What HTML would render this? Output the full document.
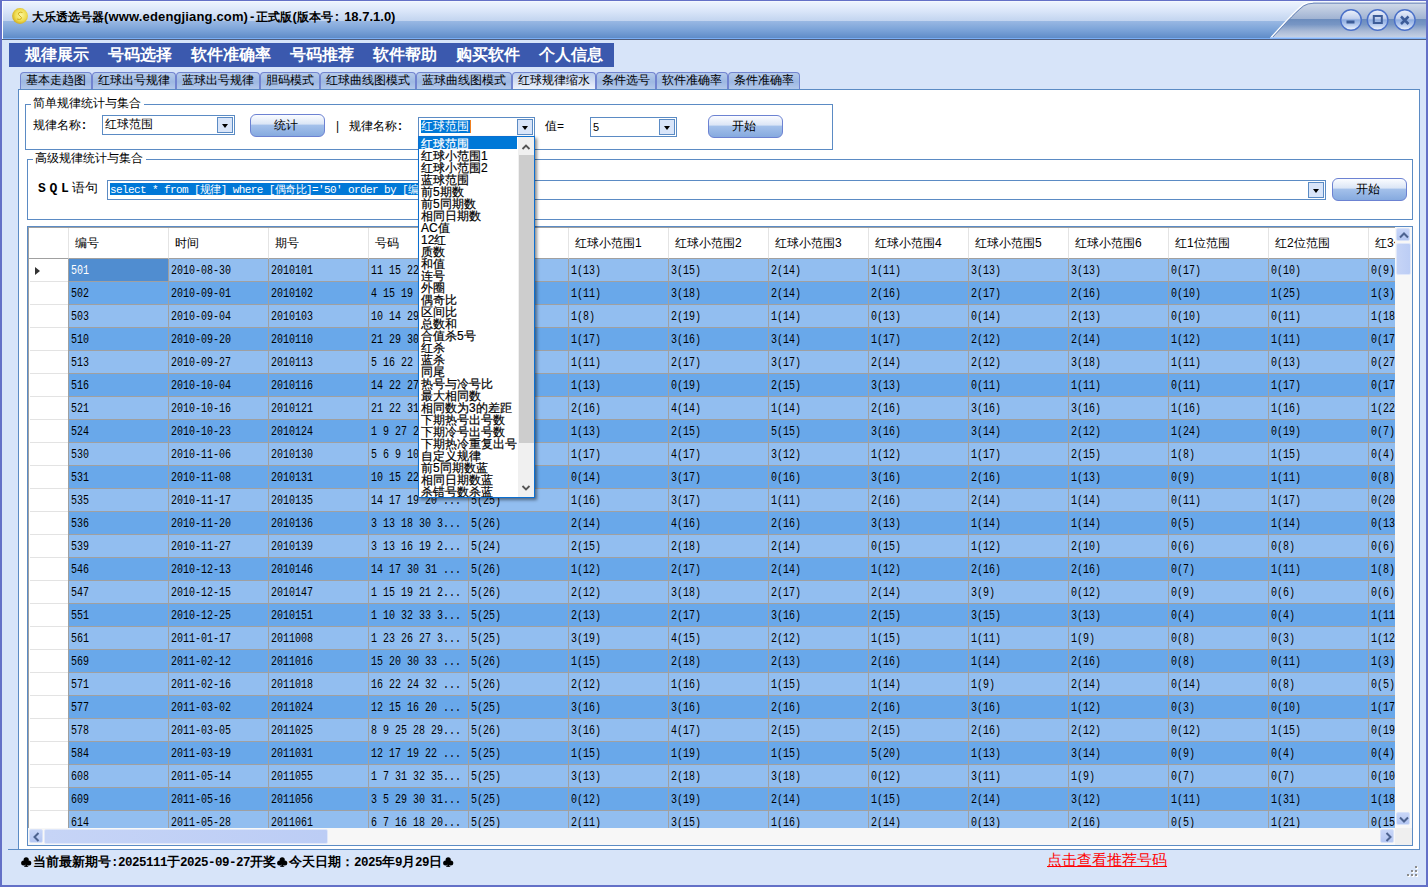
<!DOCTYPE html>
<html><head><meta charset="utf-8"><style>
*{margin:0;padding:0;box-sizing:border-box}
html,body{width:1428px;height:887px;overflow:hidden}
body{position:relative;background:#d7e4f9;font-family:"Liberation Sans",sans-serif;font-size:12px;color:#000}
.a{position:absolute}
/* window border */
#bl{left:0;top:0;width:2px;height:887px;background:#6370c7}
#br{left:1426px;top:0;width:2px;height:887px;background:#6370c7}
#bb{left:0;top:885px;width:1428px;height:2px;background:#6370c7}
#bt{left:0;top:0;width:1428px;height:1px;background:#6370c7}
/* title bar */
#tb{left:2px;top:1px;width:1424px;height:38px;background:linear-gradient(to bottom,#fbfdff 0px,#ecf3fe 1px,#dae6f9 10px,#c2d4ef 20px,#99b8e3 20px,#7ba3d8 29px,#5f8cc8 37px,#79aef5 37px,#79aef5 38px);border-left:1px solid #fff}
#tbl{left:2px;top:39px;width:1424px;height:1px;background:#4f5d7c}
#coin{left:12px;top:8px;width:16px;height:16px;border-radius:50%;background:radial-gradient(circle at 45% 40%,#fff6a8 0,#f0d640 45%,#d2ad18 80%,#b89010 100%)}
#ttl{left:32px;top:9px;font-size:13px;font-weight:bold;line-height:16px;white-space:nowrap;color:#000;letter-spacing:0px}
/* menu */
#menu{left:9px;top:43px;width:605px;height:24px;background:#3b59ae}
.mi{position:absolute;top:46px;font-size:15.6px;font-weight:bold;color:#fff;line-height:17px;white-space:nowrap}
/* tabs */
.tab{position:absolute;top:72px;height:17px;border:1px solid #7284d0;border-bottom:none;border-radius:4px 4px 0 0;background:linear-gradient(to bottom,#b6cbea 0,#9db8e2 55%,#b3c8ea 100%);font-size:12px;line-height:15px;padding-left:5px;white-space:nowrap}
.tab.on{background:linear-gradient(to bottom,#bccfee 0,#d2def3 50%,#eef3fc 100%)}
/* panel */
#panel{left:18px;top:89px;width:1402px;height:761px;background:#fff;border:1px solid #5b8bc4}
.gb{position:absolute;border:1px solid #5b8bc4}
.gbt{position:absolute;background:#fff;padding:0 3px 0 2px;font-size:12px;line-height:13px;white-space:nowrap}
.lbl{position:absolute;font-size:12px;line-height:13px;white-space:nowrap}
.cb{position:absolute;height:20px;border:1px solid #5b8bc4;background:#fff}
.cbb{position:absolute;top:1px;width:16px;height:16px;border:1px solid #5b8bc4;background:#d9e5f9}
.cbb:after{content:"";position:absolute;left:4px;top:6px;border-left:3.5px solid transparent;border-right:3.5px solid transparent;border-top:4px solid #000}
.btn{position:absolute;border:1px solid #6c82d2;border-radius:6px;background:linear-gradient(to bottom,#fbfcff 0,#dce6f6 42%,#a3c0ea 50%,#86aadf 100%);text-align:center;font-size:12px;line-height:21px;padding-right:4px}
/* grid */
#grid{left:27px;top:226px;width:1386px;height:620px;border:1px solid #5b8bc4;background:#fff;overflow:hidden}
#gin{position:absolute;left:0;top:0;width:1384px;height:618px;border-top:1px solid #a0a0a0;border-left:1px solid #a0a0a0;overflow:hidden}
#clip{position:absolute;left:0;top:0;width:1367px;height:601px;overflow:hidden}
.hc{position:absolute;top:0;height:31px;width:100px;border-left:1px solid #e4e4e4;border-bottom:1px solid #a0a0a0;padding-left:6px;line-height:30px;font-size:12px;white-space:nowrap;background:#fff}
.row{position:absolute;left:39px;width:1400px;height:23px}
.rl{background:#92bef0}
.rd{background:#69a8ea}
.row .c{position:absolute;top:0;width:100px;height:23px;border-left:1px solid #a0a0a0;border-bottom:1px solid #a0a0a0;padding-left:2px;font-family:"Liberation Mono",monospace;font-size:12px;line-height:24px;white-space:nowrap;overflow:hidden}
.row .c span{display:inline-block;transform:scaleX(0.8333);transform-origin:0 0}
.row .c.sel{background:#508dd0;color:#fff}
.rh{position:absolute;left:1px;width:38px;height:23px;border-bottom:1px solid #e3e3e3}
/* scrollbars */
#vs{left:1395px;top:227px;width:17px;height:601px;background:#f7f7f7}
#hs{left:28px;top:828px;width:1367px;height:17px;background:#f7f7f7}
#corner{left:1395px;top:828px;width:17px;height:17px;background:#efefef}
.sbtn{position:absolute;width:14px;height:13px;border-radius:2px;background:linear-gradient(to bottom,#c8d6f8,#b4c6f2);border:1px solid #d8e2f8}
.thumbv{position:absolute;background:linear-gradient(to right,#c6d4f6,#bccdf5);border-radius:2px;border:1px solid #dfe7fa}
/* dropdown */
#dd{left:418px;top:136px;width:117px;height:362px;border:1px solid #0b6fd1;background:#fff;box-shadow:2px 2px 3px rgba(0,0,0,.45);overflow:hidden}
.it{position:absolute;left:0px;width:99px;height:12px;font-size:12px;line-height:14px;white-space:nowrap;padding-left:2px;-webkit-text-stroke:0.2px #000}
.it.sel{-webkit-text-stroke:0.2px #fff}
.it.sel{background:#0078d7;color:#fff}
#ddsb{position:absolute;left:98px;top:0;width:17px;height:360px;background:#f0f0f0;border-left:1px solid #fff}
/* status */
#st{left:20px;top:854px;font-size:13px;font-weight:bold;line-height:15px;white-space:nowrap}
#lnk{left:1047px;top:852px;font-size:15px;line-height:16px;color:#f00;text-decoration:underline;white-space:nowrap}

.tc{font-size:12.25px}
#st .m{font-family:"Liberation Mono",monospace;font-size:12.5px;letter-spacing:-0.5px}
#st .cl{display:inline-block;width:13px;height:13px;position:relative;vertical-align:top}
.rhh{position:absolute;left:0;top:0;width:40px;height:31px;border-bottom:1px solid #a0a0a0;border-right:1px solid #a0a0a0;background:#fff}


</style></head><body>
<div class="a" id="tb"></div>
<div class="a" id="tbl"></div>
<svg class="a" style="left:12px;top:8px" width="16" height="16"><defs><radialGradient id="coing" cx="0.55" cy="0.45" r="0.6"><stop offset="0" stop-color="#fbf7a0"/><stop offset="0.6" stop-color="#efdc50"/><stop offset="1" stop-color="#caa418"/></radialGradient></defs><circle cx="8" cy="8" r="7.9" fill="url(#coing)"/><path d="M10.5,4.5 Q8,3.5 6.5,5 Q5.5,6.5 8,8 Q10.5,9.5 9,11 Q7.5,12 5,11" fill="none" stroke="#d4b020" stroke-width="1"/></svg>
<div class="a" id="ttl"><span class="tc">大乐透选号器</span><span style="letter-spacing:0.15px">(www.edengjiang.com)</span><span style="margin:0 2px">-</span><span class="tc">正式版</span>(<span class="tc">版本号</span><span style="margin:0 5px 0 2px">:</span>18.7.1.0)</div>
<svg class="a" style="left:1260px;top:0" width="168" height="40" viewBox="1260 0 168 40">
<defs>
<linearGradient id="cg" x1="0" y1="0" x2="0" y2="1">
<stop offset="0" stop-color="#d3dcea"/><stop offset="0.46" stop-color="#a0b3d2"/><stop offset="0.47" stop-color="#6b8cbd"/><stop offset="0.62" stop-color="#7896c4"/><stop offset="0.8" stop-color="#a9bad6"/><stop offset="1" stop-color="#c9d4e6"/>
</linearGradient>
<radialGradient id="bg" cx="0.5" cy="0.75" r="0.6">
<stop offset="0" stop-color="#ffffff"/><stop offset="0.5" stop-color="#a9c3ea"/><stop offset="1" stop-color="#7a9fd8"/>
</radialGradient>
<linearGradient id="bgt" x1="0" y1="0" x2="0" y2="1">
<stop offset="0" stop-color="#eef2fb"/><stop offset="0.42" stop-color="#c3d1ee"/><stop offset="0.5" stop-color="#8dace0"/><stop offset="0.72" stop-color="#b4c9ee"/><stop offset="1" stop-color="#f8fbff"/>
</linearGradient>
</defs>
<path d="M1270.5,38 C1280,28 1292,14 1302,5.5 Q1306,2.5 1313,2.5 L1426,2.5 L1426,38 Z" fill="url(#cg)"/>
<path d="M1270.5,38 C1280,28 1292,14 1302,5.5 Q1306,2.5 1313,2.5" fill="none" stroke="#ffffff" stroke-width="1.3"/>
<path d="M1272,38 C1281.5,28 1293.5,14 1303.5,6 Q1307.5,3.2 1314,3.2 L1426,3.2" fill="none" stroke="#6a86b8" stroke-width="1"/>
<rect x="1270" y="37" width="156" height="1.2" fill="#a9c9f9"/>
<g stroke="#4a70c8" stroke-width="1.4" fill="url(#bgt)">
<circle cx="1351" cy="20" r="10.3"/><circle cx="1377.6" cy="20" r="10.3"/><circle cx="1404.8" cy="20" r="10.3"/>
</g>
<rect x="1346.5" y="20.5" width="8" height="3" fill="#3d5c98"/>
<rect x="1373.8" y="16" width="8" height="7" fill="none" stroke="#3d5c98" stroke-width="2"/>
<path d="M1401,16.5 L1408.5,24 M1408.5,16.5 L1401,24" stroke="#3d5c98" stroke-width="2.5"/>
</svg>
<div class="a" id="bl"></div><div class="a" id="br"></div><div class="a" id="bb"></div><div class="a" id="bt"></div>

<div class="a" id="menu"></div>
<div class="mi" style="left:25px">规律展示</div>
<div class="mi" style="left:108px">号码选择</div>
<div class="mi" style="left:191px">软件准确率</div>
<div class="mi" style="left:290px">号码推荐</div>
<div class="mi" style="left:373px">软件帮助</div>
<div class="mi" style="left:456px">购买软件</div>
<div class="mi" style="left:539px">个人信息</div>

<div class="a" id="panel"></div>
<div class="tab" style="left:20px;width:72px">基本走趋图</div>
<div class="tab" style="left:92px;width:84px">红球出号规律</div>
<div class="tab" style="left:176px;width:84px">蓝球出号规律</div>
<div class="tab" style="left:260px;width:60px">胆码模式</div>
<div class="tab" style="left:320px;width:96px">红球曲线图模式</div>
<div class="tab" style="left:416px;width:96px">蓝球曲线图模式</div>
<div class="tab on" style="left:512px;width:84px">红球规律缩水</div>
<div class="tab" style="left:596px;width:60px">条件选号</div>
<div class="tab" style="left:656px;width:72px">软件准确率</div>
<div class="tab" style="left:728px;width:72px">条件准确率</div>

<div class="gb" style="left:25px;top:104px;width:808px;height:46px"></div>
<div class="gbt" style="left:31px;top:97px">简单规律统计与集合</div>
<div class="lbl" style="left:33px;top:119px">规律名称<span style="display:inline-block;width:12px;padding-left:1px;font-weight:bold">:</span></div>
<div class="cb" style="left:102px;top:115px;width:133px"><div class="lbl" style="left:2px;top:2px">红球范围</div><div class="cbb" style="left:114px"></div></div>
<div class="btn" style="left:250px;top:114px;width:75px;height:23px">统计</div>
<div class="lbl" style="left:336px;top:120px">|</div>
<div class="lbl" style="left:349px;top:120px">规律名称<span style="display:inline-block;width:12px;padding-left:1px;font-weight:bold">:</span></div>
<div class="cb" style="left:418px;top:117px;width:117px"><div class="lbl" style="left:2px;top:2px;background:#0078d7;color:#fff;padding:0 1px 0 0">红球范围</div><div style="position:absolute;left:51px;top:2px;width:1px;height:13px;background:#f08020"></div><div class="cbb" style="left:98px"></div></div>
<div class="lbl" style="left:545px;top:120px">值=</div>
<div class="cb" style="left:590px;top:117px;width:87px"><div class="lbl" style="left:2px;top:3px;font-size:11px">5</div><div class="cbb" style="left:68px"></div></div>
<div class="btn" style="left:708px;top:115px;width:75px;height:23px">开始</div>

<div class="gb" style="left:27px;top:159px;width:1386px;height:61px"></div>
<div class="gbt" style="left:33px;top:152px">高级规律统计与集合</div>
<div class="lbl" style="left:38px;top:181px"><b style="font-family:'Liberation Mono',monospace;letter-spacing:3.7px;font-size:13px">SQL</b><span style="font-size:13px;margin-left:-0.5px">语句</span></div>
<div class="cb" style="left:107px;top:180px;width:1219px"><div class="lbl" style="left:2px;top:2px;height:12px;background:#0078d7;color:#fff;font-family:'Liberation Mono',monospace;font-size:11px;letter-spacing:-0.6px;line-height:14px;overflow:hidden">select * from [规律] where [偶奇比]='50' order by [编号]</div><div class="cbb" style="left:1200px"></div></div>
<div class="btn" style="left:1332px;top:178px;width:75px;height:23px">开始</div>

<div class="a" id="grid"><div id="gin"><div id="clip">
<div class="rhh"></div>
<div class="hc" style="left:39px">编号</div>
<div class="hc" style="left:139px">时间</div>
<div class="hc" style="left:239px">期号</div>
<div class="hc" style="left:339px">号码</div>
<div class="hc" style="left:439px">红球范围</div>
<div class="hc" style="left:539px">红球小范围1</div>
<div class="hc" style="left:639px">红球小范围2</div>
<div class="hc" style="left:739px">红球小范围3</div>
<div class="hc" style="left:839px">红球小范围4</div>
<div class="hc" style="left:939px">红球小范围5</div>
<div class="hc" style="left:1039px">红球小范围6</div>
<div class="hc" style="left:1139px">红1位范围</div>
<div class="hc" style="left:1239px">红2位范围</div>
<div class="hc" style="left:1339px">红3位范围</div>
<div class="row rl" style="top:31px">
<div class="c sel" style="left:0px"><span>501</span></div>
<div class="c" style="left:100px"><span>2010-08-30</span></div>
<div class="c" style="left:200px"><span>2010101</span></div>
<div class="c" style="left:300px"><span>11 15 22 ...</span></div>
<div class="c" style="left:400px"><span>5(25)</span></div>
<div class="c" style="left:500px"><span>1(13)</span></div>
<div class="c" style="left:600px"><span>3(15)</span></div>
<div class="c" style="left:700px"><span>2(14)</span></div>
<div class="c" style="left:800px"><span>1(11)</span></div>
<div class="c" style="left:900px"><span>3(13)</span></div>
<div class="c" style="left:1000px"><span>3(13)</span></div>
<div class="c" style="left:1100px"><span>0(17)</span></div>
<div class="c" style="left:1200px"><span>0(10)</span></div>
<div class="c" style="left:1300px"><span>0(9)</span></div>
</div>
<div class="rh" style="top:31px"></div>
<div class="row rd" style="top:54px">
<div class="c" style="left:0px"><span>502</span></div>
<div class="c" style="left:100px"><span>2010-09-01</span></div>
<div class="c" style="left:200px"><span>2010102</span></div>
<div class="c" style="left:300px"><span>4 15 19 2...</span></div>
<div class="c" style="left:400px"><span>5(25)</span></div>
<div class="c" style="left:500px"><span>1(11)</span></div>
<div class="c" style="left:600px"><span>3(18)</span></div>
<div class="c" style="left:700px"><span>2(14)</span></div>
<div class="c" style="left:800px"><span>2(16)</span></div>
<div class="c" style="left:900px"><span>2(17)</span></div>
<div class="c" style="left:1000px"><span>2(16)</span></div>
<div class="c" style="left:1100px"><span>0(10)</span></div>
<div class="c" style="left:1200px"><span>1(25)</span></div>
<div class="c" style="left:1300px"><span>1(3)</span></div>
</div>
<div class="rh" style="top:54px"></div>
<div class="row rl" style="top:77px">
<div class="c" style="left:0px"><span>503</span></div>
<div class="c" style="left:100px"><span>2010-09-04</span></div>
<div class="c" style="left:200px"><span>2010103</span></div>
<div class="c" style="left:300px"><span>10 14 29 ...</span></div>
<div class="c" style="left:400px"><span>5(25)</span></div>
<div class="c" style="left:500px"><span>1(8)</span></div>
<div class="c" style="left:600px"><span>2(19)</span></div>
<div class="c" style="left:700px"><span>1(14)</span></div>
<div class="c" style="left:800px"><span>0(13)</span></div>
<div class="c" style="left:900px"><span>0(14)</span></div>
<div class="c" style="left:1000px"><span>2(13)</span></div>
<div class="c" style="left:1100px"><span>0(10)</span></div>
<div class="c" style="left:1200px"><span>0(11)</span></div>
<div class="c" style="left:1300px"><span>1(18)</span></div>
</div>
<div class="rh" style="top:77px"></div>
<div class="row rd" style="top:100px">
<div class="c" style="left:0px"><span>510</span></div>
<div class="c" style="left:100px"><span>2010-09-20</span></div>
<div class="c" style="left:200px"><span>2010110</span></div>
<div class="c" style="left:300px"><span>21 29 30 ...</span></div>
<div class="c" style="left:400px"><span>5(25)</span></div>
<div class="c" style="left:500px"><span>1(17)</span></div>
<div class="c" style="left:600px"><span>3(16)</span></div>
<div class="c" style="left:700px"><span>3(14)</span></div>
<div class="c" style="left:800px"><span>1(17)</span></div>
<div class="c" style="left:900px"><span>2(12)</span></div>
<div class="c" style="left:1000px"><span>2(14)</span></div>
<div class="c" style="left:1100px"><span>1(12)</span></div>
<div class="c" style="left:1200px"><span>1(11)</span></div>
<div class="c" style="left:1300px"><span>0(17)</span></div>
</div>
<div class="rh" style="top:100px"></div>
<div class="row rl" style="top:123px">
<div class="c" style="left:0px"><span>513</span></div>
<div class="c" style="left:100px"><span>2010-09-27</span></div>
<div class="c" style="left:200px"><span>2010113</span></div>
<div class="c" style="left:300px"><span>5 16 22 2...</span></div>
<div class="c" style="left:400px"><span>5(25)</span></div>
<div class="c" style="left:500px"><span>1(11)</span></div>
<div class="c" style="left:600px"><span>2(17)</span></div>
<div class="c" style="left:700px"><span>3(17)</span></div>
<div class="c" style="left:800px"><span>2(14)</span></div>
<div class="c" style="left:900px"><span>2(12)</span></div>
<div class="c" style="left:1000px"><span>3(18)</span></div>
<div class="c" style="left:1100px"><span>1(11)</span></div>
<div class="c" style="left:1200px"><span>0(13)</span></div>
<div class="c" style="left:1300px"><span>0(27)</span></div>
</div>
<div class="rh" style="top:123px"></div>
<div class="row rd" style="top:146px">
<div class="c" style="left:0px"><span>516</span></div>
<div class="c" style="left:100px"><span>2010-10-04</span></div>
<div class="c" style="left:200px"><span>2010116</span></div>
<div class="c" style="left:300px"><span>14 22 27 ...</span></div>
<div class="c" style="left:400px"><span>5(25)</span></div>
<div class="c" style="left:500px"><span>1(13)</span></div>
<div class="c" style="left:600px"><span>0(19)</span></div>
<div class="c" style="left:700px"><span>2(15)</span></div>
<div class="c" style="left:800px"><span>3(13)</span></div>
<div class="c" style="left:900px"><span>0(11)</span></div>
<div class="c" style="left:1000px"><span>1(11)</span></div>
<div class="c" style="left:1100px"><span>0(11)</span></div>
<div class="c" style="left:1200px"><span>1(17)</span></div>
<div class="c" style="left:1300px"><span>0(17)</span></div>
</div>
<div class="rh" style="top:146px"></div>
<div class="row rl" style="top:169px">
<div class="c" style="left:0px"><span>521</span></div>
<div class="c" style="left:100px"><span>2010-10-16</span></div>
<div class="c" style="left:200px"><span>2010121</span></div>
<div class="c" style="left:300px"><span>21 22 31 ...</span></div>
<div class="c" style="left:400px"><span>5(25)</span></div>
<div class="c" style="left:500px"><span>2(16)</span></div>
<div class="c" style="left:600px"><span>4(14)</span></div>
<div class="c" style="left:700px"><span>1(14)</span></div>
<div class="c" style="left:800px"><span>2(16)</span></div>
<div class="c" style="left:900px"><span>3(16)</span></div>
<div class="c" style="left:1000px"><span>3(16)</span></div>
<div class="c" style="left:1100px"><span>1(16)</span></div>
<div class="c" style="left:1200px"><span>1(16)</span></div>
<div class="c" style="left:1300px"><span>1(22)</span></div>
</div>
<div class="rh" style="top:169px"></div>
<div class="row rd" style="top:192px">
<div class="c" style="left:0px"><span>524</span></div>
<div class="c" style="left:100px"><span>2010-10-23</span></div>
<div class="c" style="left:200px"><span>2010124</span></div>
<div class="c" style="left:300px"><span>1 9 27 28...</span></div>
<div class="c" style="left:400px"><span>5(25)</span></div>
<div class="c" style="left:500px"><span>1(13)</span></div>
<div class="c" style="left:600px"><span>2(15)</span></div>
<div class="c" style="left:700px"><span>5(15)</span></div>
<div class="c" style="left:800px"><span>3(16)</span></div>
<div class="c" style="left:900px"><span>3(14)</span></div>
<div class="c" style="left:1000px"><span>2(12)</span></div>
<div class="c" style="left:1100px"><span>1(24)</span></div>
<div class="c" style="left:1200px"><span>0(19)</span></div>
<div class="c" style="left:1300px"><span>0(7)</span></div>
</div>
<div class="rh" style="top:192px"></div>
<div class="row rl" style="top:215px">
<div class="c" style="left:0px"><span>530</span></div>
<div class="c" style="left:100px"><span>2010-11-06</span></div>
<div class="c" style="left:200px"><span>2010130</span></div>
<div class="c" style="left:300px"><span>5 6 9 10 ...</span></div>
<div class="c" style="left:400px"><span>5(25)</span></div>
<div class="c" style="left:500px"><span>1(17)</span></div>
<div class="c" style="left:600px"><span>4(17)</span></div>
<div class="c" style="left:700px"><span>3(12)</span></div>
<div class="c" style="left:800px"><span>1(12)</span></div>
<div class="c" style="left:900px"><span>1(17)</span></div>
<div class="c" style="left:1000px"><span>2(15)</span></div>
<div class="c" style="left:1100px"><span>1(8)</span></div>
<div class="c" style="left:1200px"><span>1(15)</span></div>
<div class="c" style="left:1300px"><span>0(4)</span></div>
</div>
<div class="rh" style="top:215px"></div>
<div class="row rd" style="top:238px">
<div class="c" style="left:0px"><span>531</span></div>
<div class="c" style="left:100px"><span>2010-11-08</span></div>
<div class="c" style="left:200px"><span>2010131</span></div>
<div class="c" style="left:300px"><span>10 15 22 ...</span></div>
<div class="c" style="left:400px"><span>5(25)</span></div>
<div class="c" style="left:500px"><span>0(14)</span></div>
<div class="c" style="left:600px"><span>3(17)</span></div>
<div class="c" style="left:700px"><span>0(16)</span></div>
<div class="c" style="left:800px"><span>3(16)</span></div>
<div class="c" style="left:900px"><span>2(16)</span></div>
<div class="c" style="left:1000px"><span>1(13)</span></div>
<div class="c" style="left:1100px"><span>0(9)</span></div>
<div class="c" style="left:1200px"><span>1(11)</span></div>
<div class="c" style="left:1300px"><span>0(8)</span></div>
</div>
<div class="rh" style="top:238px"></div>
<div class="row rl" style="top:261px">
<div class="c" style="left:0px"><span>535</span></div>
<div class="c" style="left:100px"><span>2010-11-17</span></div>
<div class="c" style="left:200px"><span>2010135</span></div>
<div class="c" style="left:300px"><span>14 17 19 20 ...</span></div>
<div class="c" style="left:400px"><span>5(25)</span></div>
<div class="c" style="left:500px"><span>1(16)</span></div>
<div class="c" style="left:600px"><span>3(17)</span></div>
<div class="c" style="left:700px"><span>1(11)</span></div>
<div class="c" style="left:800px"><span>2(16)</span></div>
<div class="c" style="left:900px"><span>2(14)</span></div>
<div class="c" style="left:1000px"><span>1(14)</span></div>
<div class="c" style="left:1100px"><span>0(11)</span></div>
<div class="c" style="left:1200px"><span>1(17)</span></div>
<div class="c" style="left:1300px"><span>0(20)</span></div>
</div>
<div class="rh" style="top:261px"></div>
<div class="row rd" style="top:284px">
<div class="c" style="left:0px"><span>536</span></div>
<div class="c" style="left:100px"><span>2010-11-20</span></div>
<div class="c" style="left:200px"><span>2010136</span></div>
<div class="c" style="left:300px"><span>3 13 18 30 3...</span></div>
<div class="c" style="left:400px"><span>5(26)</span></div>
<div class="c" style="left:500px"><span>2(14)</span></div>
<div class="c" style="left:600px"><span>4(16)</span></div>
<div class="c" style="left:700px"><span>2(16)</span></div>
<div class="c" style="left:800px"><span>3(13)</span></div>
<div class="c" style="left:900px"><span>1(14)</span></div>
<div class="c" style="left:1000px"><span>1(14)</span></div>
<div class="c" style="left:1100px"><span>0(5)</span></div>
<div class="c" style="left:1200px"><span>1(14)</span></div>
<div class="c" style="left:1300px"><span>0(13)</span></div>
</div>
<div class="rh" style="top:284px"></div>
<div class="row rl" style="top:307px">
<div class="c" style="left:0px"><span>539</span></div>
<div class="c" style="left:100px"><span>2010-11-27</span></div>
<div class="c" style="left:200px"><span>2010139</span></div>
<div class="c" style="left:300px"><span>3 13 16 19 2...</span></div>
<div class="c" style="left:400px"><span>5(24)</span></div>
<div class="c" style="left:500px"><span>2(15)</span></div>
<div class="c" style="left:600px"><span>2(18)</span></div>
<div class="c" style="left:700px"><span>2(14)</span></div>
<div class="c" style="left:800px"><span>0(15)</span></div>
<div class="c" style="left:900px"><span>1(12)</span></div>
<div class="c" style="left:1000px"><span>2(10)</span></div>
<div class="c" style="left:1100px"><span>0(6)</span></div>
<div class="c" style="left:1200px"><span>0(8)</span></div>
<div class="c" style="left:1300px"><span>0(6)</span></div>
</div>
<div class="rh" style="top:307px"></div>
<div class="row rd" style="top:330px">
<div class="c" style="left:0px"><span>546</span></div>
<div class="c" style="left:100px"><span>2010-12-13</span></div>
<div class="c" style="left:200px"><span>2010146</span></div>
<div class="c" style="left:300px"><span>14 17 30 31 ...</span></div>
<div class="c" style="left:400px"><span>5(26)</span></div>
<div class="c" style="left:500px"><span>1(12)</span></div>
<div class="c" style="left:600px"><span>2(17)</span></div>
<div class="c" style="left:700px"><span>2(14)</span></div>
<div class="c" style="left:800px"><span>1(12)</span></div>
<div class="c" style="left:900px"><span>2(16)</span></div>
<div class="c" style="left:1000px"><span>2(16)</span></div>
<div class="c" style="left:1100px"><span>0(7)</span></div>
<div class="c" style="left:1200px"><span>1(11)</span></div>
<div class="c" style="left:1300px"><span>1(8)</span></div>
</div>
<div class="rh" style="top:330px"></div>
<div class="row rl" style="top:353px">
<div class="c" style="left:0px"><span>547</span></div>
<div class="c" style="left:100px"><span>2010-12-15</span></div>
<div class="c" style="left:200px"><span>2010147</span></div>
<div class="c" style="left:300px"><span>1 15 19 21 2...</span></div>
<div class="c" style="left:400px"><span>5(26)</span></div>
<div class="c" style="left:500px"><span>2(12)</span></div>
<div class="c" style="left:600px"><span>3(18)</span></div>
<div class="c" style="left:700px"><span>2(17)</span></div>
<div class="c" style="left:800px"><span>2(14)</span></div>
<div class="c" style="left:900px"><span>3(9)</span></div>
<div class="c" style="left:1000px"><span>0(12)</span></div>
<div class="c" style="left:1100px"><span>0(9)</span></div>
<div class="c" style="left:1200px"><span>0(6)</span></div>
<div class="c" style="left:1300px"><span>0(6)</span></div>
</div>
<div class="rh" style="top:353px"></div>
<div class="row rd" style="top:376px">
<div class="c" style="left:0px"><span>551</span></div>
<div class="c" style="left:100px"><span>2010-12-25</span></div>
<div class="c" style="left:200px"><span>2010151</span></div>
<div class="c" style="left:300px"><span>1 10 32 33 3...</span></div>
<div class="c" style="left:400px"><span>5(25)</span></div>
<div class="c" style="left:500px"><span>2(13)</span></div>
<div class="c" style="left:600px"><span>2(17)</span></div>
<div class="c" style="left:700px"><span>3(16)</span></div>
<div class="c" style="left:800px"><span>2(15)</span></div>
<div class="c" style="left:900px"><span>3(15)</span></div>
<div class="c" style="left:1000px"><span>3(13)</span></div>
<div class="c" style="left:1100px"><span>0(4)</span></div>
<div class="c" style="left:1200px"><span>0(4)</span></div>
<div class="c" style="left:1300px"><span>1(11)</span></div>
</div>
<div class="rh" style="top:376px"></div>
<div class="row rl" style="top:399px">
<div class="c" style="left:0px"><span>561</span></div>
<div class="c" style="left:100px"><span>2011-01-17</span></div>
<div class="c" style="left:200px"><span>2011008</span></div>
<div class="c" style="left:300px"><span>1 23 26 27 3...</span></div>
<div class="c" style="left:400px"><span>5(25)</span></div>
<div class="c" style="left:500px"><span>3(19)</span></div>
<div class="c" style="left:600px"><span>4(15)</span></div>
<div class="c" style="left:700px"><span>2(12)</span></div>
<div class="c" style="left:800px"><span>1(15)</span></div>
<div class="c" style="left:900px"><span>1(11)</span></div>
<div class="c" style="left:1000px"><span>1(9)</span></div>
<div class="c" style="left:1100px"><span>0(8)</span></div>
<div class="c" style="left:1200px"><span>0(3)</span></div>
<div class="c" style="left:1300px"><span>1(12)</span></div>
</div>
<div class="rh" style="top:399px"></div>
<div class="row rd" style="top:422px">
<div class="c" style="left:0px"><span>569</span></div>
<div class="c" style="left:100px"><span>2011-02-12</span></div>
<div class="c" style="left:200px"><span>2011016</span></div>
<div class="c" style="left:300px"><span>15 20 30 33 ...</span></div>
<div class="c" style="left:400px"><span>5(26)</span></div>
<div class="c" style="left:500px"><span>1(15)</span></div>
<div class="c" style="left:600px"><span>2(18)</span></div>
<div class="c" style="left:700px"><span>2(13)</span></div>
<div class="c" style="left:800px"><span>2(16)</span></div>
<div class="c" style="left:900px"><span>1(14)</span></div>
<div class="c" style="left:1000px"><span>2(16)</span></div>
<div class="c" style="left:1100px"><span>0(8)</span></div>
<div class="c" style="left:1200px"><span>0(11)</span></div>
<div class="c" style="left:1300px"><span>1(3)</span></div>
</div>
<div class="rh" style="top:422px"></div>
<div class="row rl" style="top:445px">
<div class="c" style="left:0px"><span>571</span></div>
<div class="c" style="left:100px"><span>2011-02-16</span></div>
<div class="c" style="left:200px"><span>2011018</span></div>
<div class="c" style="left:300px"><span>16 22 24 32 ...</span></div>
<div class="c" style="left:400px"><span>5(26)</span></div>
<div class="c" style="left:500px"><span>2(12)</span></div>
<div class="c" style="left:600px"><span>1(16)</span></div>
<div class="c" style="left:700px"><span>1(15)</span></div>
<div class="c" style="left:800px"><span>1(14)</span></div>
<div class="c" style="left:900px"><span>1(9)</span></div>
<div class="c" style="left:1000px"><span>2(14)</span></div>
<div class="c" style="left:1100px"><span>0(14)</span></div>
<div class="c" style="left:1200px"><span>0(8)</span></div>
<div class="c" style="left:1300px"><span>0(5)</span></div>
</div>
<div class="rh" style="top:445px"></div>
<div class="row rd" style="top:468px">
<div class="c" style="left:0px"><span>577</span></div>
<div class="c" style="left:100px"><span>2011-03-02</span></div>
<div class="c" style="left:200px"><span>2011024</span></div>
<div class="c" style="left:300px"><span>12 15 16 20 ...</span></div>
<div class="c" style="left:400px"><span>5(25)</span></div>
<div class="c" style="left:500px"><span>3(16)</span></div>
<div class="c" style="left:600px"><span>3(16)</span></div>
<div class="c" style="left:700px"><span>2(16)</span></div>
<div class="c" style="left:800px"><span>2(16)</span></div>
<div class="c" style="left:900px"><span>3(16)</span></div>
<div class="c" style="left:1000px"><span>1(12)</span></div>
<div class="c" style="left:1100px"><span>0(3)</span></div>
<div class="c" style="left:1200px"><span>0(10)</span></div>
<div class="c" style="left:1300px"><span>1(17)</span></div>
</div>
<div class="rh" style="top:468px"></div>
<div class="row rl" style="top:491px">
<div class="c" style="left:0px"><span>578</span></div>
<div class="c" style="left:100px"><span>2011-03-05</span></div>
<div class="c" style="left:200px"><span>2011025</span></div>
<div class="c" style="left:300px"><span>8 9 25 28 29...</span></div>
<div class="c" style="left:400px"><span>5(26)</span></div>
<div class="c" style="left:500px"><span>3(16)</span></div>
<div class="c" style="left:600px"><span>4(17)</span></div>
<div class="c" style="left:700px"><span>2(15)</span></div>
<div class="c" style="left:800px"><span>2(15)</span></div>
<div class="c" style="left:900px"><span>2(16)</span></div>
<div class="c" style="left:1000px"><span>2(12)</span></div>
<div class="c" style="left:1100px"><span>0(12)</span></div>
<div class="c" style="left:1200px"><span>1(15)</span></div>
<div class="c" style="left:1300px"><span>0(19)</span></div>
</div>
<div class="rh" style="top:491px"></div>
<div class="row rd" style="top:514px">
<div class="c" style="left:0px"><span>584</span></div>
<div class="c" style="left:100px"><span>2011-03-19</span></div>
<div class="c" style="left:200px"><span>2011031</span></div>
<div class="c" style="left:300px"><span>12 17 19 22 ...</span></div>
<div class="c" style="left:400px"><span>5(25)</span></div>
<div class="c" style="left:500px"><span>1(15)</span></div>
<div class="c" style="left:600px"><span>1(19)</span></div>
<div class="c" style="left:700px"><span>1(15)</span></div>
<div class="c" style="left:800px"><span>5(20)</span></div>
<div class="c" style="left:900px"><span>1(13)</span></div>
<div class="c" style="left:1000px"><span>3(14)</span></div>
<div class="c" style="left:1100px"><span>0(9)</span></div>
<div class="c" style="left:1200px"><span>0(4)</span></div>
<div class="c" style="left:1300px"><span>0(4)</span></div>
</div>
<div class="rh" style="top:514px"></div>
<div class="row rl" style="top:537px">
<div class="c" style="left:0px"><span>608</span></div>
<div class="c" style="left:100px"><span>2011-05-14</span></div>
<div class="c" style="left:200px"><span>2011055</span></div>
<div class="c" style="left:300px"><span>1 7 31 32 35...</span></div>
<div class="c" style="left:400px"><span>5(25)</span></div>
<div class="c" style="left:500px"><span>3(13)</span></div>
<div class="c" style="left:600px"><span>2(18)</span></div>
<div class="c" style="left:700px"><span>3(18)</span></div>
<div class="c" style="left:800px"><span>0(12)</span></div>
<div class="c" style="left:900px"><span>3(11)</span></div>
<div class="c" style="left:1000px"><span>1(9)</span></div>
<div class="c" style="left:1100px"><span>0(7)</span></div>
<div class="c" style="left:1200px"><span>0(7)</span></div>
<div class="c" style="left:1300px"><span>0(10)</span></div>
</div>
<div class="rh" style="top:537px"></div>
<div class="row rd" style="top:560px">
<div class="c" style="left:0px"><span>609</span></div>
<div class="c" style="left:100px"><span>2011-05-16</span></div>
<div class="c" style="left:200px"><span>2011056</span></div>
<div class="c" style="left:300px"><span>3 5 29 30 31...</span></div>
<div class="c" style="left:400px"><span>5(25)</span></div>
<div class="c" style="left:500px"><span>0(12)</span></div>
<div class="c" style="left:600px"><span>3(19)</span></div>
<div class="c" style="left:700px"><span>2(14)</span></div>
<div class="c" style="left:800px"><span>1(15)</span></div>
<div class="c" style="left:900px"><span>2(14)</span></div>
<div class="c" style="left:1000px"><span>3(12)</span></div>
<div class="c" style="left:1100px"><span>1(11)</span></div>
<div class="c" style="left:1200px"><span>1(31)</span></div>
<div class="c" style="left:1300px"><span>1(18)</span></div>
</div>
<div class="rh" style="top:560px"></div>
<div class="row rl" style="top:583px">
<div class="c" style="left:0px"><span>614</span></div>
<div class="c" style="left:100px"><span>2011-05-28</span></div>
<div class="c" style="left:200px"><span>2011061</span></div>
<div class="c" style="left:300px"><span>6 7 16 18 20...</span></div>
<div class="c" style="left:400px"><span>5(25)</span></div>
<div class="c" style="left:500px"><span>2(11)</span></div>
<div class="c" style="left:600px"><span>3(15)</span></div>
<div class="c" style="left:700px"><span>1(16)</span></div>
<div class="c" style="left:800px"><span>2(14)</span></div>
<div class="c" style="left:900px"><span>0(13)</span></div>
<div class="c" style="left:1000px"><span>2(16)</span></div>
<div class="c" style="left:1100px"><span>0(5)</span></div>
<div class="c" style="left:1200px"><span>1(21)</span></div>
<div class="c" style="left:1300px"><span>0(15)</span></div>
</div>
<div class="rh" style="top:583px"></div>
</div></div></div>
<div class="a" id="vs"><div class="sbtn" style="left:1px;top:1px"><svg width="14" height="13"><path d="M3,8.5 L7,4.5 L11,8.5" fill="none" stroke="#4d6390" stroke-width="2"/></svg></div><div class="thumbv" style="left:1px;top:16px;width:15px;height:32px"></div><div class="sbtn" style="left:1px;top:585px"><svg width="14" height="13"><path d="M3,4.5 L7,8.5 L11,4.5" fill="none" stroke="#4d6390" stroke-width="2"/></svg></div></div>
<div class="a" id="hs"><div class="sbtn" style="left:1px;top:1px;width:14px;height:14px"><svg width="14" height="14"><path d="M8.5,3 L4.5,7 L8.5,11" fill="none" stroke="#4d6390" stroke-width="2"/></svg></div><div class="thumbv" style="left:16px;top:1px;width:284px;height:15px"></div><div class="sbtn" style="left:1352px;top:1px;width:14px;height:14px"><svg width="14" height="14"><path d="M5.5,3 L9.5,7 L5.5,11" fill="none" stroke="#4d6390" stroke-width="2"/></svg></div></div>
<div class="a" id="corner"></div>
<div class="a" style="left:35px;top:267px;width:0;height:0;border-top:4.5px solid transparent;border-bottom:4.5px solid transparent;border-left:5px solid #333"></div>

<div class="a" id="dd">
<div class="it sel" style="top:0px">红球范围</div>
<div class="it" style="top:12px">红球小范围1</div>
<div class="it" style="top:24px">红球小范围2</div>
<div class="it" style="top:36px">蓝球范围</div>
<div class="it" style="top:48px">前5期数</div>
<div class="it" style="top:60px">前5同期数</div>
<div class="it" style="top:72px">相同日期数</div>
<div class="it" style="top:84px">AC值</div>
<div class="it" style="top:96px">12红</div>
<div class="it" style="top:108px">质数</div>
<div class="it" style="top:120px">和值</div>
<div class="it" style="top:132px">连号</div>
<div class="it" style="top:144px">外圈</div>
<div class="it" style="top:156px">偶奇比</div>
<div class="it" style="top:168px">区间比</div>
<div class="it" style="top:180px">总数和</div>
<div class="it" style="top:192px">合值杀5号</div>
<div class="it" style="top:204px">红杀</div>
<div class="it" style="top:216px">蓝杀</div>
<div class="it" style="top:228px">同尾</div>
<div class="it" style="top:240px">热号与冷号比</div>
<div class="it" style="top:252px">最大相同数</div>
<div class="it" style="top:264px">相同数为3的差距</div>
<div class="it" style="top:276px">下期热号出号数</div>
<div class="it" style="top:288px">下期冷号出号数</div>
<div class="it" style="top:300px">下期热冷重复出号</div>
<div class="it" style="top:312px">自定义规律</div>
<div class="it" style="top:324px">前5同期数蓝</div>
<div class="it" style="top:336px">相同日期数蓝</div>
<div class="it" style="top:348px">杀错号数杀蓝</div>
<div id="ddsb"><svg style="position:absolute;left:0;top:0" width="16" height="18"><path d="M4.5,12 L8,8.5 L11.5,12" fill="none" stroke="#555" stroke-width="1.8"/></svg><div style="position:absolute;left:1px;top:18px;width:15px;height:288px;background:#cdcdcd"></div><svg style="position:absolute;left:0;top:342px" width="16" height="18"><path d="M4.5,7 L8,10.5 L11.5,7" fill="none" stroke="#555" stroke-width="1.8"/></svg></div>
</div>

<div class="a" id="st"><span class="cl"><svg width="13" height="11" style="position:absolute;left:0.5px;top:3px"><g fill="#000"><circle cx="5.2" cy="2.8" r="2.6"/><circle cx="2.6" cy="5.9" r="2.5"/><circle cx="7.8" cy="5.9" r="2.5"/><rect x="4.4" y="4" width="1.6" height="5.5"/><rect x="3.2" y="8.6" width="4" height="1.2"/></g></svg></span>当前最新期号<span class="m">:2025111</span>于<span class="m">2025-09-27</span>开奖<span class="cl"><svg width="13" height="11" style="position:absolute;left:0.5px;top:3px"><g fill="#000"><circle cx="5.2" cy="2.8" r="2.6"/><circle cx="2.6" cy="5.9" r="2.5"/><circle cx="7.8" cy="5.9" r="2.5"/><rect x="4.4" y="4" width="1.6" height="5.5"/><rect x="3.2" y="8.6" width="4" height="1.2"/></g></svg></span>今天日期：<span class="m">2025</span>年<span class="m">9</span>月<span class="m">29</span>日<span class="cl"><svg width="13" height="11" style="position:absolute;left:0.5px;top:3px"><g fill="#000"><circle cx="5.2" cy="2.8" r="2.6"/><circle cx="2.6" cy="5.9" r="2.5"/><circle cx="7.8" cy="5.9" r="2.5"/><rect x="4.4" y="4" width="1.6" height="5.5"/><rect x="3.2" y="8.6" width="4" height="1.2"/></g></svg></span></div>
<div class="a" id="lnk">点击查看推荐号码</div>
<div class="a" style="left:8px;top:849px;width:1412px;height:1px;background:#5b8bc4"></div>
<svg class="a" style="left:1404px;top:864px" width="16" height="16"><g fill="#fff"><rect x="12" y="3" width="2" height="2"/><rect x="8" y="7" width="2" height="2"/><rect x="12" y="7" width="2" height="2"/><rect x="4" y="11" width="2" height="2"/><rect x="8" y="11" width="2" height="2"/><rect x="12" y="11" width="2" height="2"/></g><g fill="#8c8c8c"><rect x="11" y="2" width="2" height="2"/><rect x="7" y="6" width="2" height="2"/><rect x="11" y="6" width="2" height="2"/><rect x="3" y="10" width="2" height="2"/><rect x="7" y="10" width="2" height="2"/><rect x="11" y="10" width="2" height="2"/></g></svg>

</body></html>
